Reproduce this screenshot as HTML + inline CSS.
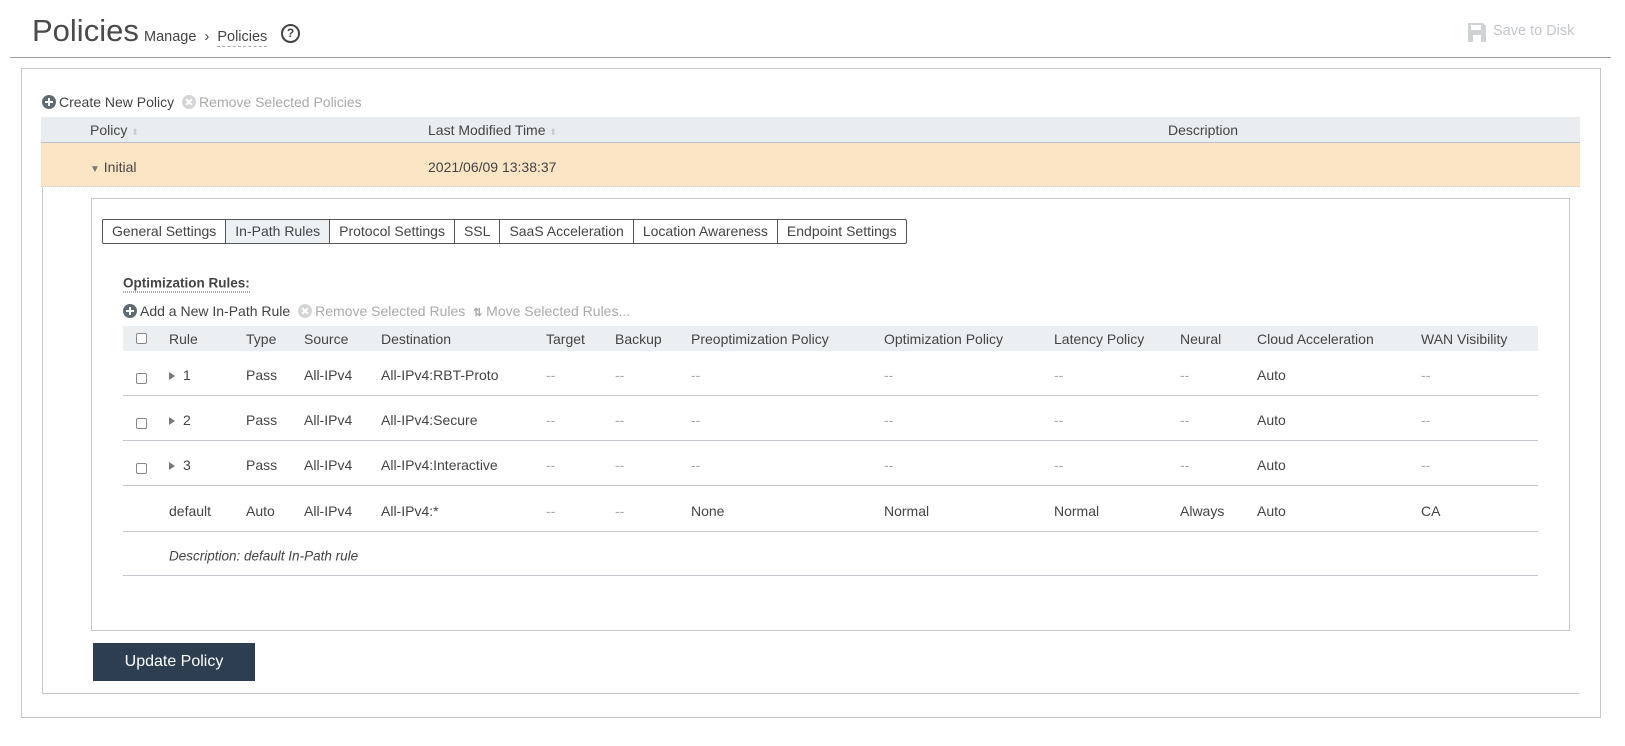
<!DOCTYPE html>
<html><head><meta charset="utf-8"><style>
*{margin:0;padding:0;box-sizing:border-box}
body{width:1625px;height:746px;background:#fff;font-family:"Liberation Sans",Arial,sans-serif;color:#444;font-size:14px;position:relative;overflow:hidden}
.a{position:absolute;white-space:nowrap}
.c{position:absolute;transform:translateY(-50%);white-space:nowrap}
.d{color:#aaa}
.ico{display:inline-block;width:14px;height:14px;border-radius:50%;vertical-align:-2px;position:relative;margin-right:3px}
.plus{background:#5f6b73}
.plus:before,.plus:after{content:"";position:absolute;background:#fff;left:3px;top:6px;width:8px;height:2px}
.plus:after{left:6px;top:3px;width:2px;height:8px}
.x{background:#d3d6d9}
.x:before,.x:after{content:"";position:absolute;background:#fff;left:3px;top:6px;width:8px;height:2px;transform:rotate(45deg)}
.x:after{transform:rotate(-45deg)}
.cb{position:absolute;width:11px;height:11px;border:1px solid #888;border-radius:2px;background:#fff}
.tri{display:inline-block;width:0;height:0;border-top:4px solid transparent;border-bottom:4px solid transparent;border-left:6px solid #777;margin-right:8px}
.tabs{position:absolute;left:102px;top:219px;height:25px;display:flex;border:1px solid #555;border-radius:2px}
.tabs div{padding:0 9px;line-height:23px;border-left:1px solid #555;font-size:14px;color:#444}
.tabs div:first-child{border-left:none}
.hr{position:absolute;left:123px;width:1415px;height:1px;background:#c5c9cd}
</style></head><body>
<div class="a" style="left:32px;top:13px;font-size:31px;color:#4a4a4a">Policies</div>
<div class="a" style="left:144px;top:29px;font-size:14.5px;color:#444">Manage &nbsp;›&nbsp; <span style="border-bottom:1px dashed #aaa;padding-bottom:1px">Policies</span></div>
<div class="a" style="left:281px;top:24px;width:19px;height:19px;border:2px solid #444;border-radius:50%;font-size:12px;line-height:15px;text-align:center;font-weight:bold;color:#444">?</div>
<svg class="a" style="left:1468px;top:23px" width="18" height="19" viewBox="0 0 18 19"><path d="M0 0H15L18 3V19H0Z" fill="#cfd3d6"/><rect x="3" y="2" width="10" height="5" fill="#fff"/><rect x="5" y="12" width="8" height="7" fill="#fff"/></svg>
<div class="a" style="left:1493px;top:23px;font-size:14.5px;color:#c2c6ca">Save to Disk</div>
<div class="a" style="left:10px;top:57px;width:1601px;height:1px;background:#9a9fa3"></div>
<div class="a" style="left:21px;top:68px;width:1580px;height:650px;border:1px solid #c5c8cc"></div>
<div class="a" style="left:42px;top:187px;width:1538px;height:507px;border-left:1px solid #c5c8cc;border-bottom:1px solid #c5c8cc"></div>
<div class="c" style="left:42px;top:102px"><span class="ico plus"></span>Create New Policy <span class="d" style="margin-left:4px"><span class="ico x"></span>Remove Selected Policies</span></div>
<div class="a" style="left:41px;top:117px;width:1539px;height:26px;background:#e9edf0;border-bottom:1px solid #b8c2ca"></div>
<div class="c" style="left:90px;top:130px">Policy <span style="color:#ccc;font-size:9px">⬍</span></div>
<div class="c" style="left:428px;top:130px">Last Modified Time <span style="color:#ccc;font-size:9px">⬍</span></div>
<div class="c" style="left:1168px;top:130px">Description</div>
<div class="a" style="left:41px;top:143px;width:1539px;height:44px;background:#fce5c5;border-bottom:1px dotted #ccc"></div>
<div class="c" style="left:90px;top:167px"><span style="font-size:10px;color:#777">▼</span> Initial</div>
<div class="c" style="left:428px;top:167px">2021/06/09 13:38:37</div>
<div class="a" style="left:91px;top:198px;width:1479px;height:433px;border:1px solid #c5c8cc"></div>
<div class="tabs"><div>General Settings</div><div style="background:#eef1f4">In-Path Rules</div><div>Protocol Settings</div><div>SSL</div><div>SaaS Acceleration</div><div>Location Awareness</div><div>Endpoint Settings</div></div>
<div class="c" style="left:123px;top:284px;font-weight:bold;font-size:13.5px;border-bottom:1px dotted #555;padding-bottom:1px">Optimization Rules:</div>
<div class="c" style="left:123px;top:311px"><span class="ico plus"></span>Add a New In-Path Rule <span class="d" style="margin-left:4px"><span class="ico x"></span>Remove Selected Rules &nbsp;<b style="font-size:11px">⇅</b> Move Selected Rules...</span></div>
<div class="a" style="left:123px;top:326px;width:1415px;height:25px;background:#eceff2"></div>
<div class="cb" style="left:136px;top:333px"></div>
<div class="c" style="left:169px;top:339px">Rule</div><div class="c" style="left:246px;top:339px">Type</div><div class="c" style="left:304px;top:339px">Source</div><div class="c" style="left:381px;top:339px">Destination</div><div class="c" style="left:546px;top:339px">Target</div><div class="c" style="left:615px;top:339px">Backup</div><div class="c" style="left:691px;top:339px">Preoptimization Policy</div><div class="c" style="left:884px;top:339px">Optimization Policy</div><div class="c" style="left:1054px;top:339px">Latency Policy</div><div class="c" style="left:1180px;top:339px">Neural</div><div class="c" style="left:1257px;top:339px">Cloud Acceleration</div><div class="c" style="left:1421px;top:339px">WAN Visibility</div>

<div class="cb" style="left:136px;top:373px"></div><div class="c" style="left:169px;top:375px"><span class="tri"></span>1</div><div class="c" style="left:246px;top:375px">Pass</div><div class="c" style="left:304px;top:375px">All-IPv4</div><div class="c" style="left:381px;top:375px">All-IPv4:RBT-Proto</div><div class="c d" style="left:546px;top:375px">--</div><div class="c d" style="left:615px;top:375px">--</div><div class="c d" style="left:691px;top:375px">--</div><div class="c d" style="left:884px;top:375px">--</div><div class="c d" style="left:1054px;top:375px">--</div><div class="c d" style="left:1180px;top:375px">--</div><div class="c" style="left:1257px;top:375px">Auto</div><div class="c d" style="left:1421px;top:375px">--</div>
<div class="hr" style="top:395px"></div>
<div class="cb" style="left:136px;top:418px"></div><div class="c" style="left:169px;top:420px"><span class="tri"></span>2</div><div class="c" style="left:246px;top:420px">Pass</div><div class="c" style="left:304px;top:420px">All-IPv4</div><div class="c" style="left:381px;top:420px">All-IPv4:Secure</div><div class="c d" style="left:546px;top:420px">--</div><div class="c d" style="left:615px;top:420px">--</div><div class="c d" style="left:691px;top:420px">--</div><div class="c d" style="left:884px;top:420px">--</div><div class="c d" style="left:1054px;top:420px">--</div><div class="c d" style="left:1180px;top:420px">--</div><div class="c" style="left:1257px;top:420px">Auto</div><div class="c d" style="left:1421px;top:420px">--</div>
<div class="hr" style="top:440px"></div>
<div class="cb" style="left:136px;top:463px"></div><div class="c" style="left:169px;top:465px"><span class="tri"></span>3</div><div class="c" style="left:246px;top:465px">Pass</div><div class="c" style="left:304px;top:465px">All-IPv4</div><div class="c" style="left:381px;top:465px">All-IPv4:Interactive</div><div class="c d" style="left:546px;top:465px">--</div><div class="c d" style="left:615px;top:465px">--</div><div class="c d" style="left:691px;top:465px">--</div><div class="c d" style="left:884px;top:465px">--</div><div class="c d" style="left:1054px;top:465px">--</div><div class="c d" style="left:1180px;top:465px">--</div><div class="c" style="left:1257px;top:465px">Auto</div><div class="c d" style="left:1421px;top:465px">--</div>
<div class="hr" style="top:485px"></div>
<div class="c" style="left:169px;top:511px">default</div><div class="c" style="left:246px;top:511px">Auto</div><div class="c" style="left:304px;top:511px">All-IPv4</div><div class="c" style="left:381px;top:511px">All-IPv4:*</div><div class="c d" style="left:546px;top:511px">--</div><div class="c d" style="left:615px;top:511px">--</div><div class="c" style="left:691px;top:511px">None</div><div class="c" style="left:884px;top:511px">Normal</div><div class="c" style="left:1054px;top:511px">Normal</div><div class="c" style="left:1180px;top:511px">Always</div><div class="c" style="left:1257px;top:511px">Auto</div><div class="c" style="left:1421px;top:511px">CA</div>
<div class="hr" style="top:531px"></div>
<div class="c" style="left:169px;top:556px;font-style:italic;font-size:13.5px">Description: default In-Path rule</div>
<div class="hr" style="top:575px"></div>
<div class="a" style="left:93px;top:643px;width:162px;height:38px;background:#2c3e50;color:#fff;font-size:16px;line-height:38px;text-align:center">Update Policy</div>
</body></html>
